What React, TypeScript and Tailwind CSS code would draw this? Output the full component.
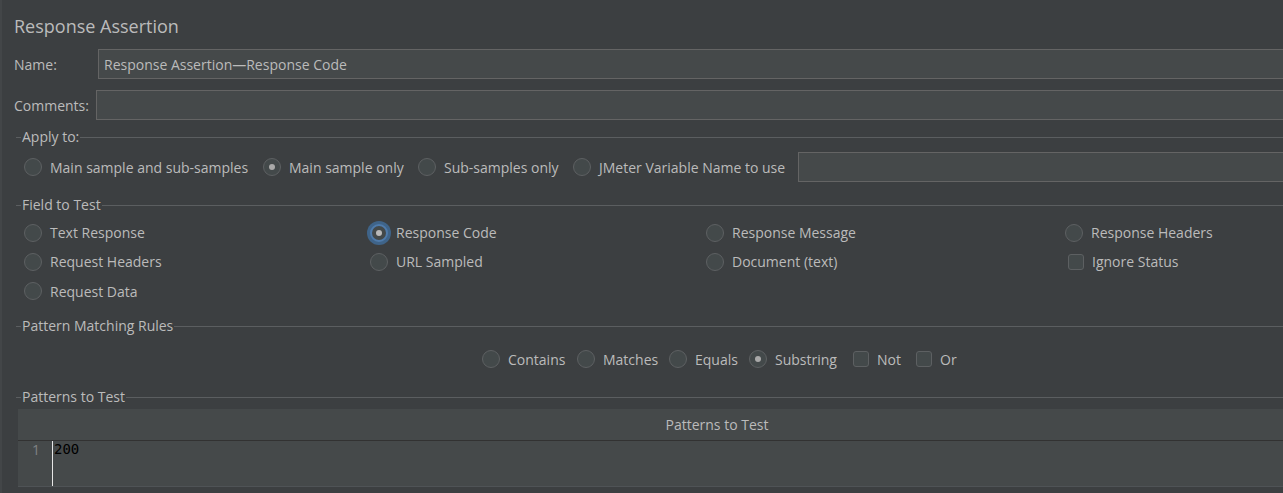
import React from "react";

const font = { fontFamily: '"Open Sans", "Noto Sans", sans-serif' };

function Radio({ checked = false, focused = false }: { checked?: boolean; focused?: boolean }) {
  if (focused) {
    return (
      <span className="relative flex h-[18px] w-[18px] shrink-0 items-center justify-center rounded-full border-[2px] border-[#4f7bab] bg-[#43494a] shadow-[0_0_0_3px_#3f6489]">
        <span className="h-[6px] w-[6px] rounded-full bg-[#b9b9b9]" />
      </span>
    );
  }
  return (
    <span className="flex h-[18px] w-[18px] shrink-0 items-center justify-center rounded-full border border-[#5d6062] bg-[#43494a]">
      {checked && <span className="h-[6px] w-[6px] rounded-full bg-[#a9a9a9]" />}
    </span>
  );
}

function Check() {
  return <span className="h-[16px] w-[16px] shrink-0 rounded-[3px] border border-[#5d6062] bg-[#43494a]" />;
}

function Opt({ label, checked, focused, w, box }: { label: string; checked?: boolean; focused?: boolean; w?: string; box?: boolean }) {
  return (
    <div className={`flex items-center gap-[8px] ${w ?? ""}`}>
      {box ? <Check /> : <Radio checked={checked} focused={focused} />}
      <span className="whitespace-nowrap text-[14px] text-[#bbbbbb]">{label}</span>
    </div>
  );
}

function Titled({ label, cls }: { label: string; cls: string }) {
  return (
    <div className={`flex items-center ${cls}`}>
      <span className="ml-[14px] h-px w-[5px] bg-[#5b5e60]" />
      <span className="px-[1px] text-[14px] leading-[20px] text-[#bbbbbb]">{label}</span>
      <span className="h-px flex-1 bg-[#5b5e60]" />
    </div>
  );
}

export default function App() {
  return (
    <div className="h-[493px] w-[1283px] overflow-hidden bg-[#3c3f41]" style={font}>
      <div className="flex h-[493px] w-[1440px] flex-col border-l-2 border-[#434648]">
        {/* title */}
        <div className="h-[49px] pl-[12px] pt-[14px]">
          <span className="text-[18px] leading-[24px] text-[#bbbbbb]">Response Assertion</span>
        </div>
        {/* name */}
        <div className="flex h-[30px] items-center">
          <span className="w-[96px] shrink-0 pl-[12px] text-[14px] text-[#bbbbbb]">Name:</span>
          <div className="flex h-[30px] flex-1 items-center border border-[#646464] bg-[#45494a] pl-[5px] text-[14px] text-[#bbbbbb]">
            Response Assertion—Response Code
          </div>
        </div>
        {/* comments */}
        <div className="mt-[11px] flex h-[30px] items-center">
          <span className="w-[94px] shrink-0 whitespace-nowrap pl-[12px] text-[14px] text-[#bbbbbb]">Comments:</span>
          <div className="h-[30px] flex-1 border border-[#646464] bg-[#45494a]" />
        </div>
        {/* apply to */}
        <Titled label="Apply to:" cls="mt-[7px] h-[20px]" />
        <div className="mt-[5px] flex h-[30px] items-center pl-[22px]">
          <Opt label="Main sample and sub-samples" w="w-[239px]" />
          <Opt label="Main sample only" checked w="w-[155px]" />
          <Opt label="Sub-samples only" w="w-[155px]" />
          <Opt label="JMeter Variable Name to use" w="w-[225px]" />
          <div className="h-[30px] flex-1 border border-[#646464] bg-[#45494a]" />
        </div>
        {/* field to test */}
        <Titled label="Field to Test" cls="mt-[13px] h-[20px]" />
        <div className="mt-[3px] grid grid-cols-[346px_336px_359px_1fr] pl-[22px]">
          <div className="flex h-[29px] items-center"><Opt label="Text Response" /></div>
          <div className="flex h-[29px] items-center"><Opt label="Response Code" focused /></div>
          <div className="flex h-[29px] items-center"><Opt label="Response Message" /></div>
          <div className="flex h-[29px] items-center"><Opt label="Response Headers" /></div>
          <div className="flex h-[29px] items-center"><Opt label="Request Headers" /></div>
          <div className="flex h-[29px] items-center"><Opt label="URL Sampled" /></div>
          <div className="flex h-[29px] items-center"><Opt label="Document (text)" /></div>
          <div className="flex h-[29px] items-center pl-[3px]"><Opt label="Ignore Status" box /></div>
          <div className="flex h-[30px] items-center"><Opt label="Request Data" /></div>
        </div>
        {/* pattern matching */}
        <Titled label="Pattern Matching Rules" cls="mt-[10px] h-[20px]" />
        <div className="mt-[9px] flex h-[28px] items-center pl-[480px]">
          <Opt label="Contains" w="w-[95px]" />
          <Opt label="Matches" w="w-[92px]" />
          <Opt label="Equals" w="w-[80px]" />
          <Opt label="Substring" checked w="w-[104px]" />
          <Opt label="Not" box w="w-[63px]" />
          <Opt label="Or" box />
        </div>
        {/* patterns to test */}
        <Titled label="Patterns to Test" cls="mt-[14px] h-[20px]" />
        <div className="ml-[16px] mt-[2px] w-[1398px]">
          <div className="flex h-[32px] items-center justify-center border-b border-[#323232] bg-[#45494a] text-[14px] text-[#bbbbbb]">
            Patterns to Test
          </div>
          <div className="flex h-[46px] border-b border-[#4f5356] bg-[#45494a]">
            <div className="w-[34px] pl-[14px] text-[14px] leading-[18px] text-[#7f8284]" style={{ fontFamily: '"Open Sans", sans-serif' }}>
              1
            </div>
            <div className="w-px bg-[#e6e6e6]" />
            <div className="pl-[1px] text-[14px] leading-[17px] text-black" style={{ fontFamily: '"DejaVu Sans Mono", monospace' }}>
              200
            </div>
          </div>
        </div>
      </div>
    </div>
  );
}
